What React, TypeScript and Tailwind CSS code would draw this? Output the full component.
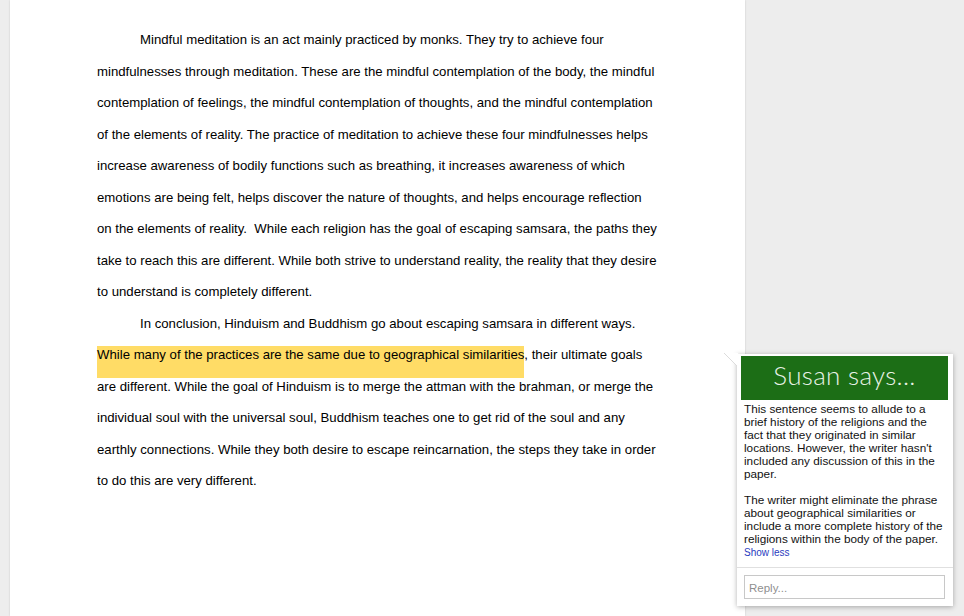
const docLines = [
  { text: 'Mindful meditation is an act mainly practiced by monks. They try to achieve four', indent: true },
  { text: 'mindfulnesses through meditation. These are the mindful contemplation of the body, the mindful' },
  { text: 'contemplation of feelings, the mindful contemplation of thoughts, and the mindful contemplation' },
  { text: 'of the elements of reality. The practice of meditation to achieve these four mindfulnesses helps' },
  { text: 'increase awareness of bodily functions such as breathing, it increases awareness of which' },
  { text: 'emotions are being felt, helps discover the nature of thoughts, and helps encourage reflection' },
  { text: 'on the elements of reality.  While each religion has the goal of escaping samsara, the paths they' },
  { text: 'take to reach this are different. While both strive to understand reality, the reality that they desire' },
  { text: 'to understand is completely different.' },
  { text: 'In conclusion, Hinduism and Buddhism go about escaping samsara in different ways.', indent: true },
  { text: ', their ultimate goals', mark: 'While many of the practices are the same due to geographical similarities' },
  { text: 'are different. While the goal of Hinduism is to merge the attman with the brahman, or merge the' },
  { text: 'individual soul with the universal soul, Buddhism teaches one to get rid of the soul and any' },
  { text: 'earthly connections. While they both desire to escape reincarnation, the steps they take in order' },
  { text: 'to do this are very different.' },
];

const commentFirst = [
  'This sentence seems to allude to a',
  'brief history of the religions and the',
  'fact that they originated in similar',
  "locations. However, the writer hasn't",
  'included any discussion of this in the',
  'paper.',
];

const commentSecond = [
  'The writer might eliminate the phrase',
  'about geographical similarities or',
  'include a more complete history of the',
  'religions within the body of the paper.',
];

function CommentCard() {
  return (
    <div className="absolute left-[737px] top-[354px] w-[216px] h-[252px] bg-white shadow-[0_1px_5px_rgba(0,0,0,0.3)] flex flex-col">
      {/* tail */}
      <svg className="absolute left-[-13px] top-[-1px]" width="14" height="14" viewBox="0 0 14 14">
        <path d="M0 0 L14 0 L14 14 Z" fill="#ffffff" />
        <path d="M0 0 L13 13" stroke="#dcdcdc" strokeWidth="1" fill="none" />
      </svg>
      <div className="mt-[2px] ml-[4px] w-[207px] h-[44px] shrink-0 bg-[#1c6e16] flex items-center justify-center pb-[6px] text-[#e8f2e6] text-[26px] font-light font-['Lato',sans-serif] tracking-[0.3px]">
        Susan says...
      </div>
      <div className="pl-[7px] pt-[2px] text-[11.75px] leading-[13px] text-[#111111] font-['Liberation_Sans',Arial,sans-serif] whitespace-nowrap">
        {commentFirst.map((line) => (
          <div key={line}>{line}</div>
        ))}
        <div className="h-[13px]" />
        {commentSecond.map((line) => (
          <div key={line}>{line}</div>
        ))}
        <div className="pt-[1px] text-[10px] leading-[14px] text-[#2a3cc0]">Show less</div>
      </div>
      <div className="mt-auto h-[39px] border-t border-[#e0e0e0] px-[7px] pt-[7px]">
        <div className="w-[201px] h-[24px] border border-[#c8c8c8] flex items-center pl-[4px] pt-[3px] text-[11.5px] text-[#8f8f8f] font-['Liberation_Sans',Arial,sans-serif]">
          Reply...
        </div>
      </div>
    </div>
  );
}

export default function App() {
  return (
    <div className="relative w-[964px] h-[616px] overflow-hidden bg-[#ededed]">
      <div className="ml-[10px] w-[735px] h-[616px] bg-white shadow-[0_0_2px_rgba(0,0,0,0.15)] pt-[32px] pl-[87px] text-[13.2px] text-black font-['Liberation_Sans',Arial,sans-serif] whitespace-pre">
        {docLines.map((line) => (
          <div key={line.text} className={`h-[31.5px] leading-[16px] ${line.indent ? 'pl-[43px]' : ''}`}>
            {line.mark && <span className="inline-block h-[31px] bg-[#ffdc66] shadow-[0_-1px_0_#ffdc66] align-top">{line.mark}</span>}
            {line.text}
          </div>
        ))}
      </div>
      <CommentCard />
    </div>
  );
}
